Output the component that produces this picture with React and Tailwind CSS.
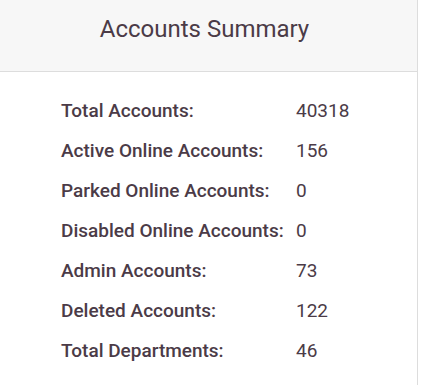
const rows = [
  ['Total Accounts:', '40318'],
  ['Active Online Accounts:', '156'],
  ['Parked Online Accounts:', '0'],
  ['Disabled Online Accounts:', '0'],
  ['Admin Accounts:', '73'],
  ['Deleted Accounts:', '122'],
  ['Total Departments:', '46'],
]

export default function App(){
  return (
    <div className="min-h-screen bg-white font-['Roboto',sans-serif] text-[#4b3b47]">
      <div className="w-[418px] min-h-[385px] border-r border-[#dddddd] bg-white">
        <div className="h-[72px] bg-[#f7f7f7] border-b border-[#dddddd] flex items-center justify-center pb-[14px] pr-[8px]">
          <h2 className="text-[24px] font-normal leading-none">Accounts Summary</h2>
        </div>
        <div className="pt-[19px] pl-[61px]">
          {rows.map(([label, value]) => (
            <div key={label} className="flex items-center h-[40px] text-[19px]">
              <div className="w-[235px] font-medium">{label}</div>
              <div>{value}</div>
            </div>
          ))}
        </div>
      </div>
    </div>
  )
}
